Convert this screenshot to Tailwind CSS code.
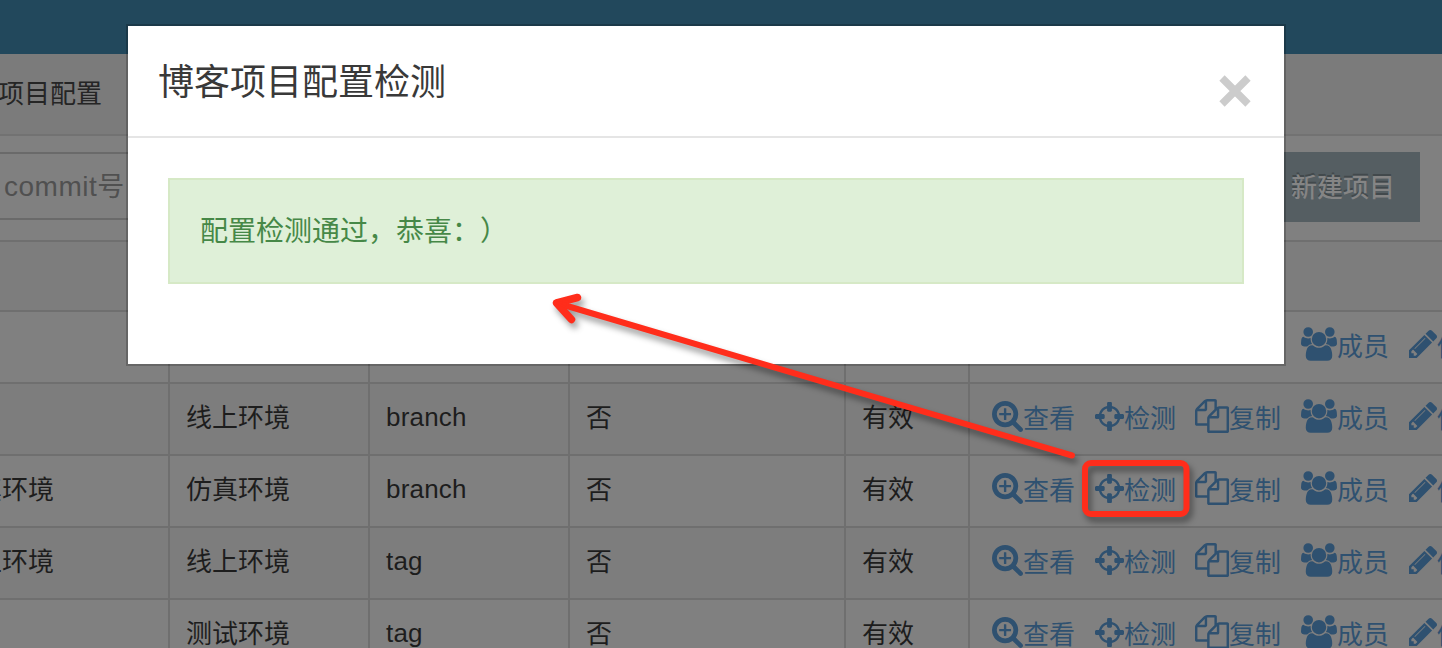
<!DOCTYPE html>
<html lang="zh">
<head>
<meta charset="utf-8">
<title>项目配置</title>
<script src="https://cdn.jsdelivr.net/npm/@tailwindcss/browser@4"></script>
</head>
<body class="relative h-[648px] w-[1442px] overflow-hidden bg-[#808080] font-['Liberation_Sans','Noto_Sans_CJK_SC',sans-serif] text-[26px] leading-[36px] text-[#1d1d1d]">
<svg class="hidden">
  <symbol id="zoom" viewBox="0 0 1664 1664"><path d="M1024 672v64q0 13-9.500 22.500t-22.500 9.500h-224v224q0 13-9.500 22.500t-22.500 9.500h-64q-13 0-22.500-9.500t-9.500-22.500v-224h-224q-13 0-22.500-9.500t-9.500-22.500v-64q0-13 9.500-22.500t22.500-9.500h224v-224q0-13 9.500-22.500t22.500-9.500h64q13 0 22.500 9.500t9.500 22.500v224h224q13 0 22.500 9.500t9.500 22.500zM1152 704q0-185-131.500-316.500t-316.500-131.500-316.500 131.500-131.500 316.500 131.500 316.500 316.500 131.500 316.500-131.500 131.500-316.500zM1664 1536q0 53-37.500 90.500t-90.500 37.500q-54 0-90-38l-343-342q-179 124-399 124-143 0-273.500-55.500t-225-150-150-225-55.500-273.500 55.500-273.500 150-225 225-150 273.500-55.500 273.500 55.500 225 150 150 225 55.500 273.500q0 220-124 399l343 343q37 37 37 90z"/></symbol>
  <symbol id="cross" viewBox="0 0 1536 1536"><path d="M1197 896h-109q-26 0-45-19t-19-45v-128q0-26 19-45t45-19h109q-32-108-112.500-188.500t-188.500-112.500v109q0 26-19 45t-45 19h-128q-26 0-45-19t-19-45v-109q-108 32-188.500 112.500t-112.500 188.500h109q26 0 45 19t19 45v128q0 26-19 45t-45 19h-109q32 108 112.500 188.500t188.500 112.500v-109q0-26 19-45t45-19h128q26 0 45 19t19 45v109q108-32 188.500-112.500t112.500-188.500zM1536 704v128q0 26-19 45t-45 19h-143q-37 161-154.500 278.500t-278.500 154.500v143q0 26-19 45t-45 19h-128q-26 0-45-19t-19-45v-143q-161-37-278.500-154.500t-154.500-278.500h-143q-26 0-45-19t-19-45v-128q0-26 19-45t45-19h143q37-161 154.500-278.500t278.500-154.500v-143q0-26 19-45t45-19h128q26 0 45 19t19 45v143q161 37 278.500 154.500t154.500 278.500h143q26 0 45 19t19 45z"/></symbol>
  <symbol id="copy" viewBox="0 0 1792 1792"><path d="M1696 384q40 0 68 28t28 68v1216q0 40-28 68t-68 28h-960q-40 0-68-28t-28-68v-288h-544q-40 0-68-28t-28-68v-672q0-40 20-88t48-76l408-408q28-28 76-48t88-20h416q40 0 68 28t28 68v328q68-40 128-40h416zM1152 597l-299 299h299v-299zM512 213l-299 299h299v-299zM708 860l316-316v-416h-384v416q0 40-28 68t-68 28h-416v640h512v-256q0-40 20-88t48-76zM1664 1664v-1152h-384v416q0 40-28 68t-68 28h-416v640h896z"/></symbol>
  <symbol id="users" viewBox="0 0 1920 1792"><path d="M593 896q-162 5-265 128h-134q-82 0-138-40.500t-56-118.500q0-353 124-353 6 0 43.500 21t97.500 42.500 119 21.500q67 0 133-23-5 37-5 66 0 139 81 256zM1664 1533q0 120-73 189.500t-194 69.500h-874q-121 0-194-69.500t-73-189.500q0-53 3.500-103.500t14-109 26.500-108.500 43-97.500 62-81 85.500-53.500 111.500-20q10 0 43 21.500t73 48 107 48 135 21.500 135-21.500 107-48 73-48 43-21.500q61 0 111.500 20t85.500 53.500 62 81 43 97.500 26.500 108.500 14 109 3.500 103.500zM640 256q0 106-75 181t-181 75-181-75-75-181 75-181 181-75 181 75 75 181zM1344 640q0 159-112.500 271.500t-271.500 112.500-271.500-112.500-112.500-271.500 112.500-271.500 271.500-112.500 271.500 112.500 112.500 271.500zM1920 865q0 78-56 118.500t-138 40.500h-134q-103-123-265-128 81-117 81-256 0-29-5-66 66 23 133 23 59 0 119-21.500t97.500-42.500 43.500-21q124 0 124 353zM1792 256q0 106-75 181t-181 75-181-75-75-181 75-181 181-75 181 75 75 181z"/></symbol>
  <symbol id="pencil" viewBox="0 0 1515 1515"><path d="M363 1387l91-91-235-235-91 91v107h128v128h107zM886 459q0-22-22-22-10 0-17 7l-542 542q-7 7-7 17 0 22 22 22 10 0 17-7l542-542q7-7 7-17zM832 267l416 416-832 832h-416v-416zM1515 363q0 53-37 90l-166 166-416-416 166-165q36-38 90-38 53 0 91 38l235 234q37 39 37 91z"/></symbol>
</svg>

<header class="h-[54px] bg-[#22485c]"></header>
<nav class="flex h-[82px] items-center border-b-2 border-[#727272] bg-[#7b7b7b]"><span class="-ml-[2px] -mt-px text-[#252525]">项目配置</span></nav>
<section class="flex h-[104px] items-start justify-between pt-4 pr-[22px]">
  <div class="flex h-[68px] w-[700px] items-center border-y-2 border-[#6a6a6a] pt-[2px] pl-1 text-[#505050]"><span class="text-[28px] tracking-[0.5px]">commit</span><span class="text-[27px]">号</span></div>
  <button class="flex h-[70px] w-[162px] items-center justify-end bg-[#555e62] pt-px pr-[25px] font-medium text-[#858585] [text-shadow:0_-2px_0_#42494c]">新建项目</button>
</section>
<main id="rows" class="border-t-2 border-[#6f6f6f]">
  <div class="h-[70px] border-b-2 border-[#6f6f6f] bg-[#7d7d7d]"></div>
</main>

<div class="absolute left-[126px] top-[24px] h-[342px] w-[1160px] border-2 border-black/20 bg-white bg-clip-padding">
  <div class="flex h-[112px] items-center justify-between border-b-2 border-[#e5e5e5] pr-[33px] pl-[30px]">
    <h4 class="mt-[3px] text-[36px] leading-[50px] text-[#393939]">博客项目配置检测</h4>
    <svg class="mt-[20px] h-8 w-8" viewBox="0 0 32 32" fill="none" stroke="#cccccc" stroke-width="7.500"><path d="M3 3L29 29M29 3L3 29"/></svg>
  </div>
  <div class="mx-10 mt-10 flex h-[106px] items-center border-2 border-[#d6e9c6] bg-[#dff0d8] pt-px pl-[30px] text-[28px] text-[#468847] [text-spacing-trim:space-all]">配置检测通过，恭喜：）</div>
</div>

<svg class="absolute top-0 left-0 h-[648px] w-[1442px] drop-shadow-[3px_5px_3px_rgba(0,0,0,0.4)]" fill="none" stroke="#ff2d1b" stroke-linecap="round" stroke-linejoin="round">
  <path d="M1072 455.500L562 304.500" stroke-width="6"/>
  <path d="M577.500 297.500L556.500 303L571.500 319.500" stroke-width="7.500"/>
  <path d="M557 303L568 301L567 308Z" fill="#ff2d1b" stroke-width="2"/>
  <rect x="1085" y="463" width="101.500" height="51" rx="6" stroke-width="6"/>
</svg>

<script>
const data = [
  ['', '', '', '', ''],
  ['', '线上环境', 'branch', '否', '有效'],
  ['仿真环境', '仿真环境', 'branch', '否', '有效'],
  ['线上环境', '线上环境', 'tag', '否', '有效'],
  ['', '测试环境', 'tag', '否', '有效']
];
const link = (id, cls, text) => `<span class="flex items-center"><svg class="${cls} shrink-0 fill-current"><use href="#${id}"/></svg><span class="mt-[3px]">${text}</span></span>`;
const links = [
  link('zoom', 'w-[31px] h-[31px] -mt-[2px]', '查看'),
  link('cross', 'w-[29px] h-[29px] -mt-[3px] ml-5', '检测'),
  link('copy', 'w-[34px] h-[34px] -mt-[3px] ml-[19px]', '复制'),
  link('users', 'w-[36px] h-[34px] -mt-[3px] ml-5', '成员'),
  link('pencil', 'w-[28px] h-[28px] -mt-[3px] ml-5', '修改')
].join('');
document.getElementById('rows').insertAdjacentHTML('beforeend', data.map((r, i) => `
  <div class="grid h-[72px] grid-cols-[170px_200px_200px_276px_124px_472px] border-b-2 border-[#6f6f6f] ${i % 2 ? 'bg-[#7d7d7d]' : 'bg-[#808080]'}">
    ${r.map((t, c) => `<div class="flex items-center overflow-hidden whitespace-nowrap border-r-2 border-[#6f6f6f] ${c === 2 ? 'pb-[5px] tracking-[0.2px]' : 'pb-[3px]'} ${c ? 'pl-4' : 'justify-end pr-[114px]'}">${t}</div>`).join('')}
    <div class="flex items-center overflow-hidden whitespace-nowrap pb-[3px] pl-[22px] text-[#2f5170]">${links}</div>
  </div>`).join(''));
</script>
</body>
</html>
